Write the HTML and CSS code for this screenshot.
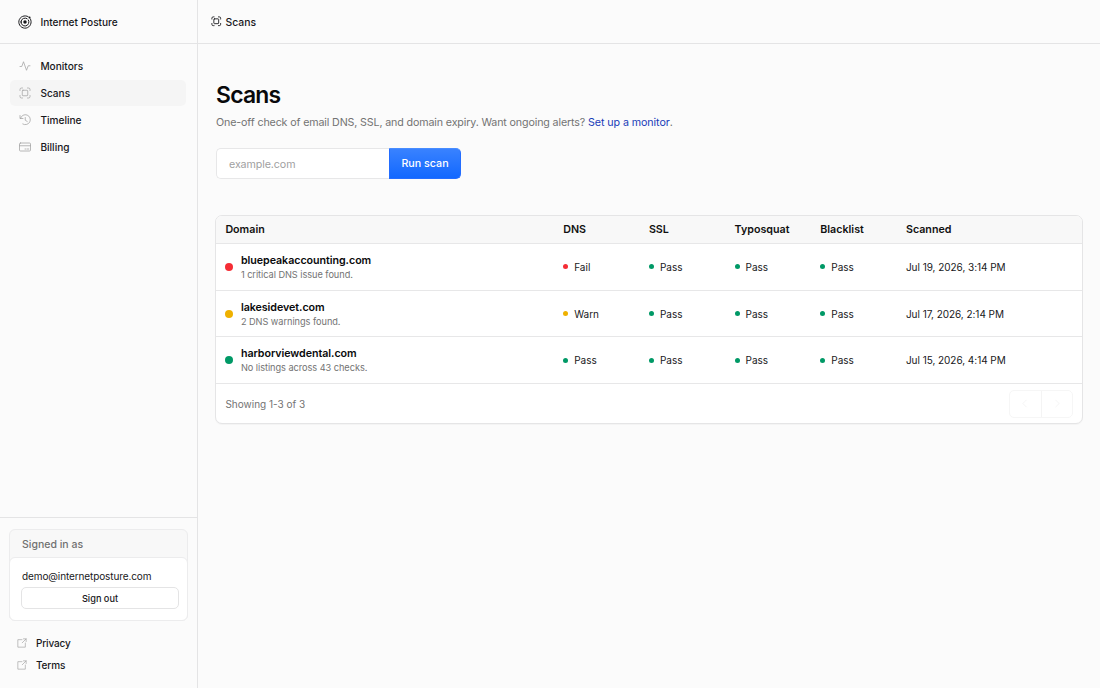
FILE: index.html
```html
<!DOCTYPE html>
<html lang="en">
<head>
<meta charset="utf-8">
<title>Scans - Internet Posture</title>
<link rel="stylesheet" href="styles.css">
</head>
<body>
<div class="app">
  <aside class="sidebar">
    <div class="brand">
      <svg class="brand-icon" viewBox="0 0 24 24"><path d="M17.500 2.900a10.600 10.600 0 1 0 3.600 3.600M15.500 6.200a6.800 6.800 0 1 0 2.300 2.300"/><circle cx="12" cy="12" r="3" class="solid"/><circle cx="19.800" cy="4.200" r="1.700" class="solid"/><circle cx="5.500" cy="12" r="1.400" class="solid"/></svg>
      <span>Internet Posture</span>
    </div>
    <nav class="nav">
      <a class="nav-item"><svg class="icon" viewBox="0 0 24 24"><path d="M2 13h3.500L9 3.500l6 17 3.500-9H22"/></svg><span>Monitors</span></a>
      <a class="nav-item active"><svg class="icon" viewBox="0 0 24 24"><path d="M2 7V5a3 3 0 0 1 3-3h2M17 2h2a3 3 0 0 1 3 3v2M22 17v2a3 3 0 0 1-3 3h-2M7 22H5a3 3 0 0 1-3-3v-2"/><rect x="6.500" y="6.500" width="11" height="11" rx="1.500"/></svg><span>Scans</span></a>
      <a class="nav-item"><svg class="icon" viewBox="0 0 24 24"><path d="M2 3v6h6M3 8.500a10 10 0 1 1 4.500 11.500M12.500 7v5.500l4 2.500"/></svg><span>Timeline</span></a>
      <a class="nav-item"><svg class="icon" viewBox="0 0 24 24"><rect x="1" y="4" width="22" height="16" rx="2"/><path d="M1 9.500h22M12 16h2M16.500 16h3"/></svg><span>Billing</span></a>
    </nav>
    <div class="sidebar-footer">
      <div class="account">
        <div class="account-title">Signed in as</div>
        <div class="account-body">
          <div class="email">demo@internetposture.com</div>
          <button class="sign-out">Sign out</button>
        </div>
      </div>
      <div class="legal">
        <a class="legal-link"><svg class="icon-small" viewBox="0 0 24 24"><path d="M12 4H2V22H20V12M15.500 2H22v6.500M22 2L12.500 11.500"/></svg><span>Privacy</span></a>
        <a class="legal-link"><svg class="icon-small" viewBox="0 0 24 24"><path d="M12 4H2V22H20V12M15.500 2H22v6.500M22 2L12.500 11.500"/></svg><span>Terms</span></a>
      </div>
    </div>
  </aside>
  <div class="page">
    <header class="topbar">
      <svg class="top-icon" viewBox="0 0 24 24"><path d="M2 7V5a3 3 0 0 1 3-3h2M17 2h2a3 3 0 0 1 3 3v2M22 17v2a3 3 0 0 1-3 3h-2M7 22H5a3 3 0 0 1-3-3v-2"/><rect x="6.500" y="6.500" width="11" height="11" rx="1.500"/></svg>
      <span>Scans</span>
    </header>
    <main class="content">
      <h1 class="title">Scans</h1>
      <p class="lead">One-off check of email DNS, SSL, and domain expiry. Want ongoing alerts? <a class="link">Set up a monitor</a>.</p>
      <form class="scan-form">
        <input class="domain-input" type="text" placeholder="example.com">
        <button class="run" type="button">Run scan</button>
      </form>
      <section class="table">
        <div class="row head"><span>Domain</span><span>DNS</span><span>SSL</span><span>Typosquat</span><span>Blacklist</span><span>Scanned</span></div>
        <div class="row">
          <div class="domain"><i class="dot red"></i><div><div class="name">bluepeakaccounting.com</div><div class="note">1 critical DNS issue found.</div></div></div>
          <div class="status"><i class="pip red"></i>Fail</div><div class="status"><i class="pip green"></i>Pass</div><div class="status"><i class="pip green"></i>Pass</div><div class="status"><i class="pip green"></i>Pass</div>
          <div class="date">Jul 19, 2026, 3:14 PM</div>
        </div>
        <div class="row">
          <div class="domain"><i class="dot amber"></i><div><div class="name">lakesidevet.com</div><div class="note">2 DNS warnings found.</div></div></div>
          <div class="status"><i class="pip amber"></i>Warn</div><div class="status"><i class="pip green"></i>Pass</div><div class="status"><i class="pip green"></i>Pass</div><div class="status"><i class="pip green"></i>Pass</div>
          <div class="date">Jul 17, 2026, 2:14 PM</div>
        </div>
        <div class="row">
          <div class="domain"><i class="dot green"></i><div><div class="name">harborviewdental.com</div><div class="note">No listings across 43 checks.</div></div></div>
          <div class="status"><i class="pip green"></i>Pass</div><div class="status"><i class="pip green"></i>Pass</div><div class="status"><i class="pip green"></i>Pass</div><div class="status"><i class="pip green"></i>Pass</div>
          <div class="date">Jul 15, 2026, 4:14 PM</div>
        </div>
        <div class="table-footer">
          <span>Showing 1-3 of 3</span>
          <div class="pager">
            <span class="page-btn"><svg class="arrow" viewBox="0 0 24 24"><path d="M14 3l-9 9 9 9"/></svg></span>
            <span class="page-btn"><svg class="arrow" viewBox="0 0 24 24"><path d="M10 3l9 9-9 9"/></svg></span>
          </div>
        </div>
      </section>
    </main>
  </div>
</div>
</body>
</html>
```
FILE: styles.css
```css
* { box-sizing: border-box; }
body { margin: 0; background: #fbfbfb; color: #18181b; font-family: Inter, "Liberation Sans", sans-serif; font-size: 10.7px; }
svg { display: block; flex: none; fill: none; stroke: currentColor; stroke-width: 1.6; stroke-linecap: round; stroke-linejoin: round; }
.solid { fill: currentColor; stroke: none; }
button, input { font: inherit; }
.app { display: flex; width: 1100px; height: 688px; overflow: hidden; }
.sidebar { display: flex; flex-direction: column; flex: none; width: 198px; border-right: 1px solid #e4e4e5; font-size: 10.1px; font-weight: 500; }
.brand { display: flex; align-items: center; gap: 8px; height: 44px; padding-left: 18.4px; border-bottom: 1px solid #e4e4e5; }
.brand span { padding-top: 1px; }
.brand-icon { width: 14px; height: 14px; stroke-width: 1.7; }
.nav { display: flex; flex-direction: column; gap: 1px; padding: 9.6px 11px 0 10px; }
.nav-item { display: flex; align-items: center; gap: 9px; height: 25.8px; padding-left: 9.4px; border-radius: 5px; }
.nav-item.active { background: #f5f5f5; }
.icon { width: 12px; height: 12px; color: #a1a1a1; stroke-width: 1.5; }
.sidebar-footer { margin-top: auto; height: 171px; padding: 11px 9px 0; border-top: 1px solid #e4e4e5; }
.account { height: 92px; border: 1px solid #ececed; border-radius: 6px; background: #f8f8f8; display: flex; flex-direction: column; }
.account-title { height: 27px; padding-left: 12px; font-size: 10.5px; line-height: 29px; color: #707070; }
.account-body { flex: 1; margin: 0 -1px -1px; padding: 11px 9px 0 12px; border: 1px solid #ececed; border-radius: 6px; background: #fff; }
.email { line-height: 14px; font-size: 10px; font-weight: 400; letter-spacing: -0.11px; }
.sign-out { display: block; width: 158px; height: 22px; margin: 4px 0 0 -1px; padding: 0; border: 1px solid #e4e4e5; border-radius: 5px; background: #fff; color: #18181b; font-size: 9.2px; font-weight: 500; }
.legal { padding: 11px 0 0 7.5px; }
.legal-link { display: flex; align-items: center; gap: 9.500px; height: 22px; font-size: 10px; letter-spacing: -0.15px; }
.icon-small { width: 10px; height: 10px; color: #a1a1a1; }
.page { flex: 1; min-width: 0; }
.topbar { display: flex; align-items: center; gap: 4px; height: 44px; padding-left: 13px; border-bottom: 1px solid #e4e4e5; font-size: 10.4px; font-weight: 500; }
.topbar span { padding-top: 1px; }
.top-icon { width: 10.5px; height: 10.5px; stroke-width: 2; }
.content { padding: 37px 17px 0 18px; }
.title { margin: 0; font-size: 22.9px; line-height: 29px; font-weight: 600; letter-spacing: -0.75px; color: #09090b; }
.lead { margin: 4px 0 0; font-size: 10.7px; line-height: 17px; letter-spacing: -0.14px; color: #737373; }
.link { color: #193cb8; letter-spacing: -0.08px; }
.scan-form { display: flex; width: 245px; height: 31px; margin: 17px 0 0; }
.domain-input { width: 173px; min-width: 0; padding: 1px 12px 0; border: 1px solid #e7e7e8; border-right: 0; border-radius: 5px 0 0 5px; background: #fff; letter-spacing: -0.1px; }
.domain-input::placeholder { color: #9f9f9f; }
.run { flex: 1; padding: 0; border: 1px solid #236dff; border-top-color: #488cff; border-radius: 0 5px 5px 0; background: linear-gradient(#3982ff, #1268ff); color: #fff; font-weight: 500; }
.table { width: 868px; margin: 36px 0 0 -1px; border: 1px solid #e5e5e6; border-radius: 7px; background: #fff; overflow: hidden; box-shadow: 0 1px 1px rgba(0,0,0,.03); }
.row { display: grid; grid-template-columns: 337.800px 85.700px 85.700px 85.700px 85.700px 1fr; align-items: center; height: 46.700px; padding-left: 9.400px; border-bottom: 1px solid #e7e7e8; }
.head { height: 28px; background: #f8f8f8; font-weight: 600; color: #111; }
.domain { display: flex; align-items: center; gap: 7.500px; padding-top: 0.500px; }
.dot { width: 8px; height: 8px; border-radius: 50%; }
.name { font-weight: 600; line-height: 15px; letter-spacing: -0.05px; color: #09090b; }
.note { font-size: 9.2px; line-height: 13px; letter-spacing: -0.04px; color: #737373; }
.status { display: flex; align-items: center; gap: 6px; font-size: 10px; }
.pip { width: 5px; height: 5px; border-radius: 50%; }
.date { font-size: 10px; letter-spacing: -0.04px; }
.red { background: #f52d35; }
.amber { background: #efb100; }
.green { background: #009966; }
.table-footer { display: flex; align-items: center; justify-content: space-between; height: 39px; padding: 0 9px 0 9.400px; font-size: 10px; color: #737373; }
.pager { display: flex; width: 64px; height: 28px; border: 1px solid #f6f6f6; border-radius: 5px; }
.page-btn { flex: 1; display: flex; align-items: center; justify-content: center; color: #eeeeee; }
.page-btn + .page-btn { border-left: 1px solid #f4f4f4; }
.arrow { width: 9px; height: 9px; }
```
